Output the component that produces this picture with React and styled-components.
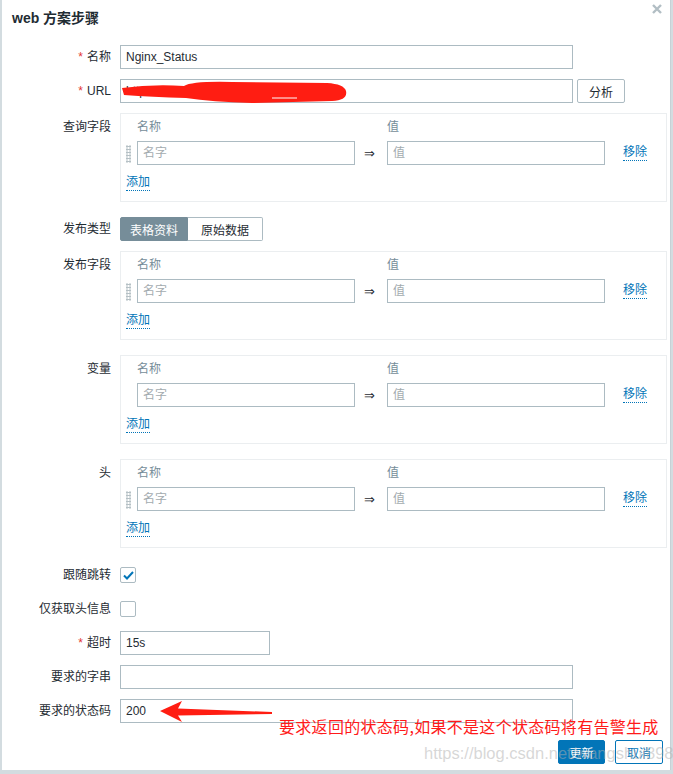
import React from 'react'
import styled, { createGlobalStyle } from 'styled-components'

const GlobalStyle = createGlobalStyle`
  html, body {
    margin: 0;
    padding: 0;
    background: #fff;
  }
  body {
    font-family: "Liberation Sans", Arial, "Noto Sans CJK SC", sans-serif;
    font-size: 12px;
    color: #1f2c33;
  }
  input {
    font-family: "Liberation Sans", Arial, "Noto Sans CJK SC", sans-serif;
  }
`

const Page = styled.div`
  position: relative;
  width: 673px;
  height: 774px;
  background: #d3dce0;
  overflow: hidden;
`

const Dialog = styled.div`
  position: relative;
  margin-left: 2px;
  width: 669px;
  height: 770px;
  background: #fff;
  border-right: 1px solid #c7d1d6;
  box-sizing: border-box;
`

const Header = styled.div`
  height: 35px;
  padding: 10px 0 0 10px;
  box-sizing: border-box;
`

const Title = styled.h4`
  margin: 0;
  font-size: 14px;
  line-height: 16px;
  font-weight: bold;
  color: #1f2c33;
`

const CloseButton = styled.span`
  position: absolute;
  right: 8px;
  top: 3px;
  width: 10px;
  height: 10px;
  display: block;
`

const Form = styled.div`
  display: flex;
  flex-direction: column;
  padding-top: 10px;
`

const Row = styled.div`
  display: grid;
  grid-template-columns: 99px 1fr;
  column-gap: 9px;
  padding-left: 10px;
  margin-top: ${(props) => props.$gap || 0}px;
`

const Label = styled.label`
  text-align: right;
  white-space: nowrap;
  color: #1f2c33;
  line-height: ${(props) => (props.$top ? '16px' : '24px')};
  padding-top: ${(props) => (props.$top ? '6px' : '0')};
`

const Star = styled.span`
  color: #e33734;
  margin-right: 4px;
`

const Field = styled.div`
  display: flex;
  align-items: center;
  gap: 3px;
  position: relative;
`

const Input = styled.input`
  box-sizing: border-box;
  width: ${(props) => props.$w || 453}px;
  height: 24px;
  border: 1px solid #acbbc2;
  border-radius: 0;
  padding: 0 5px;
  font-size: 12px;
  color: #1f2c33;
  background: #fff;
  outline: none;
  &::placeholder {
    color: #a3abaf;
  }
`

const Button = styled.button`
  box-sizing: border-box;
  height: 24px;
  width: ${(props) => props.$w || 48}px;
  padding: 0;
  border-radius: 2px;
  font-size: 12px;
  font-family: "Liberation Sans", Arial, "Noto Sans CJK SC", sans-serif;
  cursor: pointer;
  border: 1px solid ${(props) => (props.$variant === 'plain' ? '#acbbc2' : '#0275b8')};
  background: ${(props) => (props.$variant === 'primary' ? '#0275b8' : '#fff')};
  color: ${(props) =>
    props.$variant === 'primary' ? '#fff' : props.$variant === 'plain' ? '#1f2c33' : '#0275b8'};
`

const Box = styled.div`
  box-sizing: border-box;
  width: 547px;
  height: 89px;
  border: 1px solid #ebeef0;
  padding: 5px 5px 0;
`

const BoxGrid = styled.div`
  display: grid;
  grid-template-columns: 11px 218px 32px 218px 18px auto;
  align-items: center;
`

const ColHead = styled.div`
  line-height: 16px;
  color: #768d99;
  grid-column: ${(props) => props.$col};
`

const Handle = styled.span`
  display: block;
  width: 5px;
  height: 18px;
  margin-top: 1px;
  background-image: radial-gradient(circle, #b5c0c5 1px, transparent 1.2px);
  background-size: 3px 3px;
  background-position: -0.5px 0;
`

const Arrow = styled.span`
  text-align: center;
  font-family: "DejaVu Sans", sans-serif;
  font-size: 13px;
  color: #1f2c33;
  padding-right: 3px;
`

const Link = styled.a`
  color: #0275b8;
  text-decoration: none;
  border-bottom: 1px dotted #0275b8;
  line-height: 15px;
  cursor: pointer;
  justify-self: start;
`

const InputsRow = styled(BoxGrid)`
  margin-top: 6px;
  height: 24px;
`

const HeadRow = styled(BoxGrid)`
  height: 16px;
`

const AddRow = styled.div`
  margin-top: 10px;
  line-height: 16px;
  display: flex;
`

const Segmented = styled.div`
  display: flex;
  height: 24px;
`

const Segment = styled.span`
  box-sizing: border-box;
  display: flex;
  align-items: center;
  justify-content: center;
  width: ${(props) => props.$w}px;
  height: 24px;
  border: 1px solid ${(props) => (props.$active ? '#768d99' : '#acbbc2')};
  background: ${(props) => (props.$active ? '#768d99' : '#fff')};
  color: ${(props) => (props.$active ? '#fff' : '#1f2c33')};
  border-radius: ${(props) => (props.$active ? '2px 0 0 2px' : '0 2px 2px 0')};
  ${(props) => !props.$active && 'border-left: none;'}
`

const CheckWrap = styled.div`
  display: flex;
  align-items: center;
  height: 24px;
`

const Checkbox = styled.span`
  box-sizing: border-box;
  width: 16px;
  height: 16px;
  border: 1px solid #acbbc2;
  border-radius: 2px;
  display: flex;
  align-items: center;
  justify-content: center;
  background: #fff;
`

const Footer = styled.div`
  display: flex;
  justify-content: flex-end;
  gap: 10px;
  margin-top: 17px;
  padding-right: 7px;
`

const Censor = styled.svg`
  position: absolute;
  left: 2px;
  top: 2px;
`

const NoteArrow = styled.svg`
  position: absolute;
  left: 155px;
  top: 698px;
`

const NoteText = styled.div`
  position: absolute;
  left: 279px;
  top: 716px;
  font-family: "Noto Sans CJK SC", sans-serif;
  font-size: 16px;
  line-height: 20px;
  color: #ff1a1a;
  letter-spacing: 0.3px;
  white-space: nowrap;
`

const Watermark = styled.div`
  position: absolute;
  left: 424px;
  top: 742px;
  font-family: "Liberation Sans", Arial, sans-serif;
  font-size: 16.5px;
  line-height: 22px;
  color: rgba(175, 175, 175, 0.5);
  white-space: nowrap;
  pointer-events: none;
`

const PairBox = ({ handle }) => (
  <Box>
    <HeadRow>
      <ColHead $col={2}>名称</ColHead>
      <ColHead $col={4}>值</ColHead>
    </HeadRow>
    <InputsRow>
      {handle ? <Handle /> : <span />}
      <Input $w={218} placeholder="名字" />
      <Arrow>⇒</Arrow>
      <Input $w={218} placeholder="值" />
      <span />
      <Link>移除</Link>
    </InputsRow>
    <AddRow>
      <Link>添加</Link>
    </AddRow>
  </Box>
)

const App = () => (
  <Page>
    <GlobalStyle />
    <Dialog>
      <Header>
        <Title>web 方案步骤</Title>
        <CloseButton>
          <svg width="10" height="10" viewBox="0 0 10 10">
            <path d="M1 1 L9 9 M9 1 L1 9" stroke="#b2bec4" strokeWidth="2.4" />
          </svg>
        </CloseButton>
      </Header>

      <Form>
        <Row>
          <Label><Star>*</Star>名称</Label>
          <Field><Input defaultValue="Nginx_Status" /></Field>
        </Row>
        <Row $gap={10}>
          <Label><Star>*</Star>URL</Label>
          <Field>
            <Input defaultValue="http://" />
            <Censor width="228" height="24" viewBox="0 0 228 24">
              <path
                d="M0 7 Q30 3 62 5 Q70 0 110 1 L205 2 Q222 3 224 10 Q226 19 210 20 L130 22 Q90 21 64 17 Q30 16 2 14 Z"
                fill="#ff1d12"
              />
              <path d="M150 17 L175 17" stroke="#fff" strokeWidth="1" />
            </Censor>
            <Button $variant="plain" $w={48} style={{ marginLeft: 1 }}>分析</Button>
          </Field>
        </Row>
        <Row $gap={10}>
          <Label $top>查询字段</Label>
          <PairBox handle />
        </Row>
        <Row $gap={15}>
          <Label>发布类型</Label>
          <Segmented>
            <Segment $active $w={68}>表格资料</Segment>
            <Segment $w={75}>原始数据</Segment>
          </Segmented>
        </Row>
        <Row $gap={10}>
          <Label $top>发布字段</Label>
          <PairBox handle />
        </Row>
        <Row $gap={15}>
          <Label $top>变量</Label>
          <PairBox />
        </Row>
        <Row $gap={15}>
          <Label $top>头</Label>
          <PairBox handle />
        </Row>
        <Row $gap={15}>
          <Label>跟随跳转</Label>
          <CheckWrap>
            <Checkbox>
              <svg width="11" height="9" viewBox="0 0 11 9">
                <path d="M1 4.5 L4 7.5 L10 1" fill="none" stroke="#0275b8" strokeWidth="2" />
              </svg>
            </Checkbox>
          </CheckWrap>
        </Row>
        <Row $gap={10}>
          <Label>仅获取头信息</Label>
          <CheckWrap><Checkbox /></CheckWrap>
        </Row>
        <Row $gap={10}>
          <Label><Star>*</Star>超时</Label>
          <Field><Input $w={150} defaultValue="15s" /></Field>
        </Row>
        <Row $gap={10}>
          <Label>要求的字串</Label>
          <Field><Input /></Field>
        </Row>
        <Row $gap={10}>
          <Label>要求的状态码</Label>
          <Field><Input defaultValue="200" /></Field>
        </Row>
      </Form>

      <Footer>
        <Button $variant="primary" $w={47}>更新</Button>
        <Button $w={48}>取消</Button>
      </Footer>
    </Dialog>

    <NoteArrow width="125" height="30" viewBox="0 0 125 30">
      <path d="M5 13 L27 3 L23 10.5 L117 14 L117 16 L23 17.5 L27 24 Z" fill="#ff1d12" />
    </NoteArrow>
    <NoteText>要求返回的状态码,如果不是这个状态码将有告警生成</NoteText>
    <Watermark>https://blog.csdn.net/wangshui898</Watermark>
  </Page>
)

export default App
